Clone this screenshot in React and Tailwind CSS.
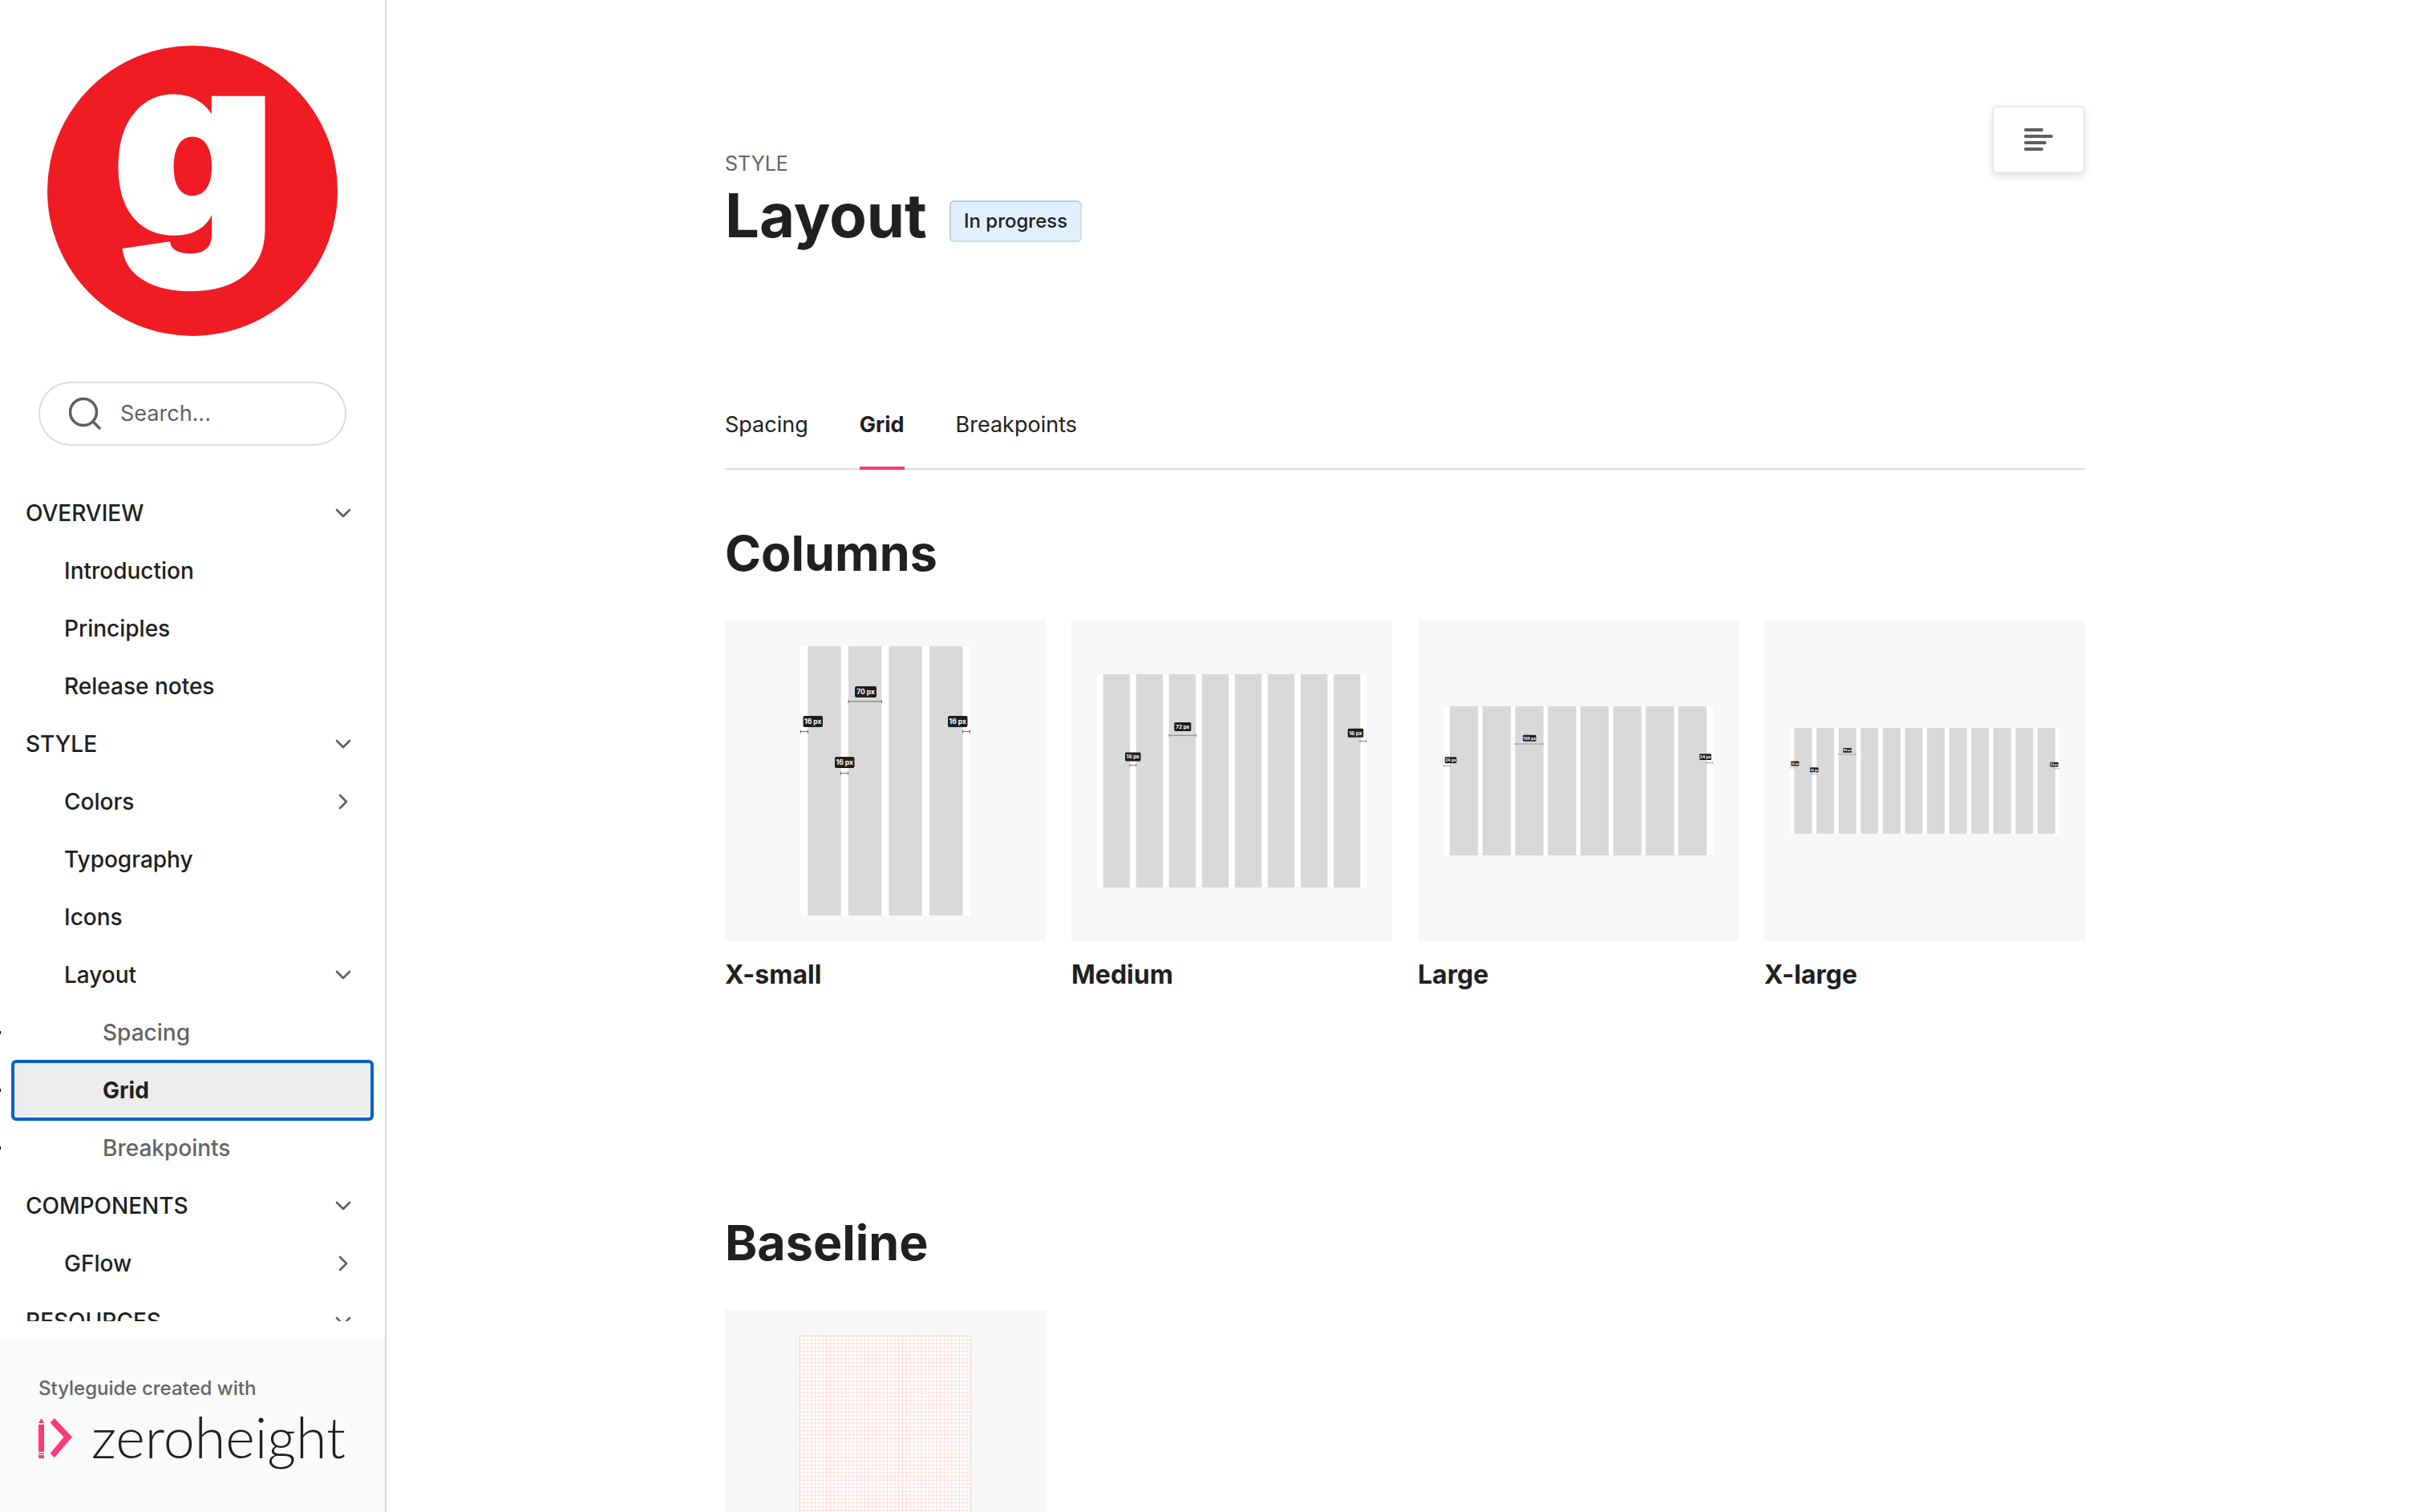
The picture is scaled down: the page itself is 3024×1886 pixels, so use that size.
import React from "react";

const NAV = [
  { label: "OVERVIEW", level: 0, icon: "down" },
  { label: "Introduction", level: 1 },
  { label: "Principles", level: 1 },
  { label: "Release notes", level: 1 },
  { label: "STYLE", level: 0, icon: "down" },
  { label: "Colors", level: 1, icon: "right" },
  { label: "Typography", level: 1 },
  { label: "Icons", level: 1 },
  { label: "Layout", level: 1, icon: "down" },
  { label: "Spacing", level: 2 },
  { label: "Grid", level: 2, active: true },
  { label: "Breakpoints", level: 2 },
  { label: "COMPONENTS", level: 0, icon: "down" },
  { label: "GFlow", level: 1, icon: "right" },
  { label: "RESOURCES", level: 0, icon: "down" },
];

const GRIDS = [
  {
    title: "X-small",
    frame: { x: 94, y: 32, w: 212, h: 336 },
    cols: { x: 103.3, w: 41.4, pitch: 50.6, n: 4 },
    font: 8.5,
    labels: [
      { t: "70 px", x: 162, y: 82, w: 27, h: 14, ly: 101, l1: 154, l2: 195.5 },
      { t: "16 px", x: 97.5, y: 119, w: 24.5, h: 14, ly: 138.5, l1: 94.5, l2: 103.5 },
      { t: "16 px", x: 278, y: 119, w: 24.5, h: 14, ly: 138.5, l1: 296.5, l2: 305.5 },
      { t: "16 px", x: 137, y: 170, w: 24.5, h: 14, ly: 190.5, l1: 144.5, l2: 153.5 },
    ],
  },
  {
    title: "Medium",
    frame: { x: 32, y: 67, w: 336, h: 266 },
    cols: { x: 39.6, w: 33.5, pitch: 41.05, n: 8 },
    font: 6.5,
    labels: [
      { t: "72 px", x: 128.3, y: 127, w: 21, h: 11, ly: 143.3, l1: 122, l2: 155.5 },
      { t: "16 px", x: 67, y: 164.4, w: 19.5, h: 11, ly: 180.5, l1: 72.8, l2: 80.8 },
      { t: "16 px", x: 344.7, y: 134.7, w: 19.5, h: 11, ly: 150.5, l1: 360, l2: 367.7 },
    ],
  },
  {
    title: "Large",
    frame: { x: 32, y: 107, w: 336, h: 186 },
    cols: { x: 40, w: 35.3, pitch: 40.7, n: 8 },
    font: 5,
    labels: [
      { t: "108 px", x: 131, y: 142.7, w: 16.5, h: 8, ly: 154, l1: 121.3, l2: 156.7 },
      { t: "24 px", x: 33.7, y: 170.3, w: 14.7, h: 7.8, ly: 181.5, l1: 32.3, l2: 40.3 },
      { t: "24 px", x: 351.3, y: 166.3, w: 14.7, h: 7.8, ly: 177.5, l1: 359.7, l2: 367.7 },
    ],
  },
  {
    title: "X-large",
    frame: { x: 32, y: 134, w: 336, h: 132 },
    cols: { x: 37.6, w: 22, pitch: 27.58, n: 12 },
    font: 3.6,
    labels: [
      { t: "94 px", x: 98.3, y: 159, w: 10.6, h: 5.8, ly: 167, l1: 92.5, l2: 114.7 },
      { t: "24 px", x: 33.2, y: 175.6, w: 10.2, h: 5.8, ly: 183.7, l1: 32.3, l2: 37.7 },
      { t: "24 px", x: 57, y: 183.3, w: 10.6, h: 6, ly: 191.7, l1: 59.3, l2: 65.3 },
      { t: "24 px", x: 356.4, y: 176.7, w: 10.4, h: 5.7, ly: 184.7, l1: 362.3, l2: 367.7 },
    ],
  },
];

function BrandLogo() {
  return (
    <svg viewBox="0 0 362 362" className="w-full overflow-visible" role="img" aria-label="g">
      <circle cx="181" cy="181" r="181" fill="#ef1c24" />
      <text
        x="183"
        y="236"
        textAnchor="middle"
        fontFamily="Inter, sans-serif"
        fontWeight="900"
        fontSize="312"
        fill="#fff"
        stroke="#fff"
        strokeWidth="6"
      >
        g
      </text>
    </svg>
  );
}

function Chevron({ dir }) {
  return (
    <svg
      viewBox="0 0 24 24"
      className="size-6 shrink-0"
      fill="none"
      stroke="#5f5f5f"
      strokeWidth="2.6"
      strokeLinecap="round"
      strokeLinejoin="round"
      aria-hidden="true"
    >
      <path d={dir === "down" ? "M4 8l8 8 8-8" : "M8 4l8 8-8 8"} />
    </svg>
  );
}

function NavItem({ item }) {
  const base = "flex h-[72px] w-full items-center justify-between pr-6 text-left text-[28px] leading-9";
  const indent = item.level === 0 ? "pl-4" : item.level === 1 ? "pl-16" : "pl-28";
  const tone = item.active
    ? "rounded-sm bg-[#ededed] font-bold text-[#202020] outline-4 -outline-offset-2 outline-[#0060d0]"
    : item.level === 2
      ? "font-medium text-[#646464]"
      : "font-medium text-[#202020]";
  return (
    <li className="relative px-4">
      {item.level === 2 && <span className="absolute top-[34px] left-0 h-1 w-px bg-black" />}
      {item.icon ? (
        <button type="button" aria-expanded={item.icon === "down"} className={`${base} ${indent} ${tone}`}>
          {item.label}
          <Chevron dir={item.icon} />
        </button>
      ) : (
        <a href="#" aria-current={item.active ? "page" : undefined} className={`${base} ${indent} ${tone}`}>
          {item.label}
        </a>
      )}
    </li>
  );
}

function Sidebar() {
  return (
    <aside className="z-10 flex h-full w-[480px] shrink-0 flex-col bg-white shadow-[2px_0_0_#dcdcdc]">
      <a href="#" className="mx-[59px] mt-[57px] block">
        <BrandLogo />
      </a>
      <label className="mx-12 mt-[57px] flex h-20 shrink-0 items-center gap-[22px] rounded-full border-2 border-[#dcdcdc] pr-8 pl-9">
        <svg
          viewBox="0 0 42 42"
          className="size-[42px] shrink-0"
          fill="none"
          stroke="#5f5f5f"
          strokeWidth="3.6"
          strokeLinecap="round"
          aria-hidden="true"
        >
          <circle cx="18" cy="19" r="16.5" />
          <path d="M30 31l8 8" />
        </svg>
        <input
          type="text"
          aria-label="Search"
          placeholder="Search..."
          className="w-full min-w-0 bg-transparent text-[27px] leading-9 outline-none placeholder:text-[#5f5f5f]"
        />
      </label>
      <nav className="mt-12 mb-5 min-h-0 flex-1 overflow-hidden">
        <ul>
          {NAV.map((item) => (
            <NavItem key={item.label + item.level} item={item} />
          ))}
        </ul>
      </nav>
      <footer className="h-[218px] shrink-0 bg-[#fafafa] px-12 pt-12">
        <p className="text-2xl leading-8 font-medium text-[#646464]">Styleguide created with</p>
        <a href="#" className="mt-1 flex items-center gap-6 text-[#202020]">
          <svg viewBox="0 0 42 50" className="h-[50px] w-[42px] shrink-0" fill="#f93a7c" aria-hidden="true">
            <path d="M0 6L3.5 0 7 6zM0 8h7v34H0zM0 43.5h7v1.500H0zM0 46h7v4H0z" />
            <path d="M20 0L42 23.500 20 49l-5.500-5L31.500 23.500 14.500 5.500z" />
          </svg>
          <span className="pb-1 font-[Lato] text-[70px] leading-[80px] font-light">zeroheight</span>
        </a>
      </footer>
    </aside>
  );
}

function GridDrawing({ grid }) {
  const { frame, cols, labels, font } = grid;
  const columns = Array.from({ length: cols.n }, (_, i) => cols.x + i * cols.pitch);
  return (
    <svg viewBox="0 0 400 400" className="block w-full bg-[#f7f7f7]" role="img" aria-label={`${grid.title} columns`}>
      <rect x={frame.x} y={frame.y} width={frame.w} height={frame.h} fill="#fff" />
      {columns.map((x) => (
        <rect key={x} x={x} y={frame.y} width={cols.w} height={frame.h} fill="#d9d9d9" />
      ))}
      {labels.map((l) => (
        <g key={`${l.x}-${l.y}`}>
          <rect x={l.x} y={l.y} width={l.w} height={l.h} rx={l.h / 7} fill="#1e1e1e" />
          <text
            x={l.x + l.w / 2}
            y={l.y + l.h / 2 + font * 0.36}
            textAnchor="middle"
            fontFamily="Inter, sans-serif"
            fontWeight="700"
            fontSize={font}
            fill="#fff"
          >
            {l.t}
          </text>
          <path
            d={`M${l.l1} ${l.ly}H${l.l2}M${l.l1} ${l.ly - font / 4}v${font / 2}M${l.l2} ${l.ly - font / 4}v${font / 2}`}
            stroke="#555"
            strokeWidth={font / 10}
            fill="none"
          />
        </g>
      ))}
    </svg>
  );
}

function BaselineDrawing() {
  const vertical = Array.from({ length: 44 }, (_, i) => 98.5 + i * 4.73);
  const horizontal = Array.from({ length: 70 }, (_, i) => 37.2 + i * 4.73);
  return (
    <svg viewBox="0 0 400 400" className="block w-full bg-[#f7f7f7]" role="img" aria-label="Baseline grid">
      <rect x="93.5" y="32.5" width="213" height="336" fill="#fff" />
      <path
        d={
          vertical.map((x) => `M${x.toFixed(2)} 33V368`).join("") +
          horizontal.map((y) => `M94 ${y.toFixed(2)}H306`).join("")
        }
        stroke="#ffd9d9"
        strokeWidth="0.9"
      />
      <rect x="93.5" y="32.5" width="213" height="336" fill="none" stroke="#e2dada" />
    </svg>
  );
}

function Figure({ title, children }) {
  return (
    <figure>
      {children}
      <figcaption className="mt-5 text-[32px] leading-[44px] font-bold">{title}</figcaption>
    </figure>
  );
}

export default function App() {
  return (
    <div className="flex h-screen overflow-hidden bg-white font-[Inter,sans-serif] text-[#202020]">
      <Sidebar />
      <main className="min-w-0 flex-1 overflow-y-auto px-8 [scrollbar-width:none]">
        <div className="mx-auto max-w-[1696px]">
          <header className="flex items-start justify-between pt-[132px]">
            <div className="pt-14">
              <p className="text-[25px] leading-8 text-[#646464]">STYLE</p>
              <div className="flex items-center gap-7">
                <h1 className="text-[76px] leading-24 font-bold">Layout</h1>
                <span className="mt-4 rounded-md border-2 border-r-[#cddcea] border-b-[#cddcea] border-l-[#bfcddb] border-t-[#bfcddb] bg-[#e1f0ff] px-4 py-2 text-2xl leading-8 font-medium">
                  In progress
                </span>
              </div>
            </div>
            <button
              type="button"
              aria-label="Table of contents"
              className="flex h-[84px] w-[116px] items-center justify-center rounded-md border-2 border-[#e8e8e8] bg-white shadow-[0_4px_10px_rgba(0,0,0,0.12)]"
            >
              <svg viewBox="0 0 36 28" className="h-7 w-9" fill="#5f5f5f" aria-hidden="true">
                <rect width="24" height="4" rx="2" />
                <rect y="8" width="36" height="4" rx="2" />
                <rect y="16" width="28" height="4" rx="2" />
                <rect y="24" width="24" height="4" rx="2" />
              </svg>
            </button>
          </header>
          <nav className="mt-[194px] flex gap-16 border-b-2 border-[#dcdcdc] text-[27px] leading-10">
            <a href="#" className="pb-8">
              Spacing
            </a>
            <a href="#" aria-current="page" className="-mb-0.5 border-b-4 border-[#f93a7c] pb-8 font-bold">
              Grid
            </a>
            <a href="#" className="pb-8">
              Breakpoints
            </a>
          </nav>
          <section>
            <h2 className="mt-16 text-[61px] leading-20 font-bold">Columns</h2>
            <div className="mt-11 grid grid-cols-4 gap-8">
              {GRIDS.map((g) => (
                <Figure key={g.title} title={g.title}>
                  <GridDrawing grid={g} />
                </Figure>
              ))}
            </div>
          </section>
          <section className="mt-[272px]">
            <h2 className="text-[61px] leading-20 font-bold">Baseline</h2>
            <div className="mt-11 grid grid-cols-4 gap-8">
              <BaselineDrawing />
            </div>
          </section>
        </div>
      </main>
    </div>
  );
}
